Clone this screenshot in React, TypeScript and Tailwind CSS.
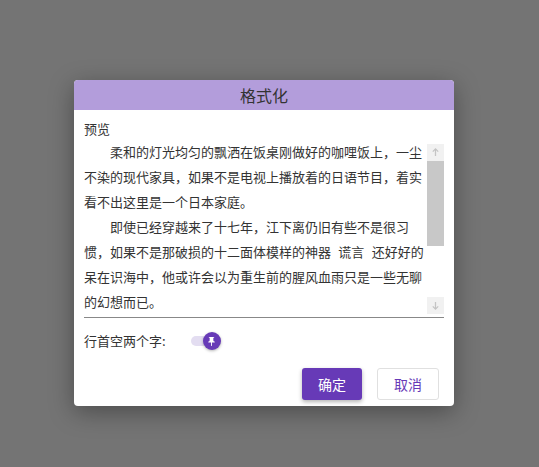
import { MdPushPin } from 'react-icons/md';

const previewLines = [
  '　　柔和的灯光均匀的飘洒在饭桌刚做好的咖哩饭上，一尘',
  '不染的现代家具，如果不是电视上播放着的日语节目，着实',
  '看不出这里是一个日本家庭。',
  '　　即使已经穿越来了十七年，江下离仍旧有些不是很习',
  '惯，如果不是那破损的十二面体模样的神器\u2002\u200a谎言\u2002\u200a还好好的',
  '呆在识海中，他或许会以为重生前的腥风血雨只是一些无聊',
  '的幻想而已。',
];

function ScrollArrow({ down }: { down?: boolean }) {
  return (
    <div className="h-[17px] flex items-center justify-center bg-[#f1f1f1]">
      <svg width="9" height="9" viewBox="0 0 10 10" fill="none" stroke="#c4c4c4" strokeWidth="1.4">
        {down ? (
          <>
            <line x1="5" y1="1" x2="5" y2="9" />
            <polyline points="2,6 5,9 8,6" />
          </>
        ) : (
          <>
            <line x1="5" y1="1" x2="5" y2="9" />
            <polyline points="2,4 5,1 8,4" />
          </>
        )}
      </svg>
    </div>
  );
}

export default function App() {
  return (
    <div
      className="w-[539px] h-[467px] bg-[#747474] pl-[74px] pt-[80px]"
      style={{ fontFamily: '"Noto Sans CJK SC", "Microsoft YaHei", sans-serif' }}
    >
      <div className="w-[380px] h-[326px] bg-white rounded-[4px] overflow-hidden shadow-[0_6px_24px_rgba(0,0,0,0.35)] flex flex-col">
        {/* Header */}
        <div className="h-[30px] shrink-0 bg-[#b39ddb] flex items-center justify-center text-[16px] text-[#333]">
          格式化
        </div>

        {/* Body */}
        <div className="px-[10px] pt-[9px]">
          <div className="text-[13px] leading-[20px] text-[#333]">预览</div>

          <div className="flex border-b border-[#888] pb-[3px]">
            <div className="flex-1 text-[13px] leading-[25px] text-[#333] whitespace-pre overflow-hidden">
              {previewLines.map((line, i) => (
                <div key={i}>{line}</div>
              ))}
            </div>
            <div className="w-[17px] h-[170px] mt-[5px] flex flex-col bg-white">
              <ScrollArrow />
              <div className="h-[85px] bg-[#c8c8c8]" />
              <div className="flex-1" />
              <ScrollArrow down />
            </div>
          </div>

          <div className="flex items-center h-[24px] mt-[11px] text-[13px] text-[#333]">
            <span>行首空两个字:</span>
            <div className="relative ml-[25px] w-[31px] h-[18px] flex items-center">
              <div className="w-[24px] h-[10px] rounded-full bg-[#e3ddf1]" />
              <div className="absolute left-[12px] top-[0px] w-[18px] h-[18px] rounded-full bg-[#673ab7] flex items-center justify-center shadow-[0_1px_3px_rgba(0,0,0,0.3)]">
                <MdPushPin className="text-white" size={11} />
              </div>
            </div>
          </div>
        </div>

        {/* Footer */}
        <div className="flex justify-end gap-[15px] pr-[15px] mt-[15px]">
          <button className="w-[60px] h-[32px] rounded-[3px] bg-[#673ab7] text-white text-[14px] shadow-[0_2px_4px_rgba(0,0,0,0.3)]">
            确定
          </button>
          <button className="w-[62px] h-[32px] rounded-[3px] bg-white border border-[#e0e0e0] text-[#673ab7] text-[14px]">
            取消
          </button>
        </div>
      </div>
    </div>
  );
}
